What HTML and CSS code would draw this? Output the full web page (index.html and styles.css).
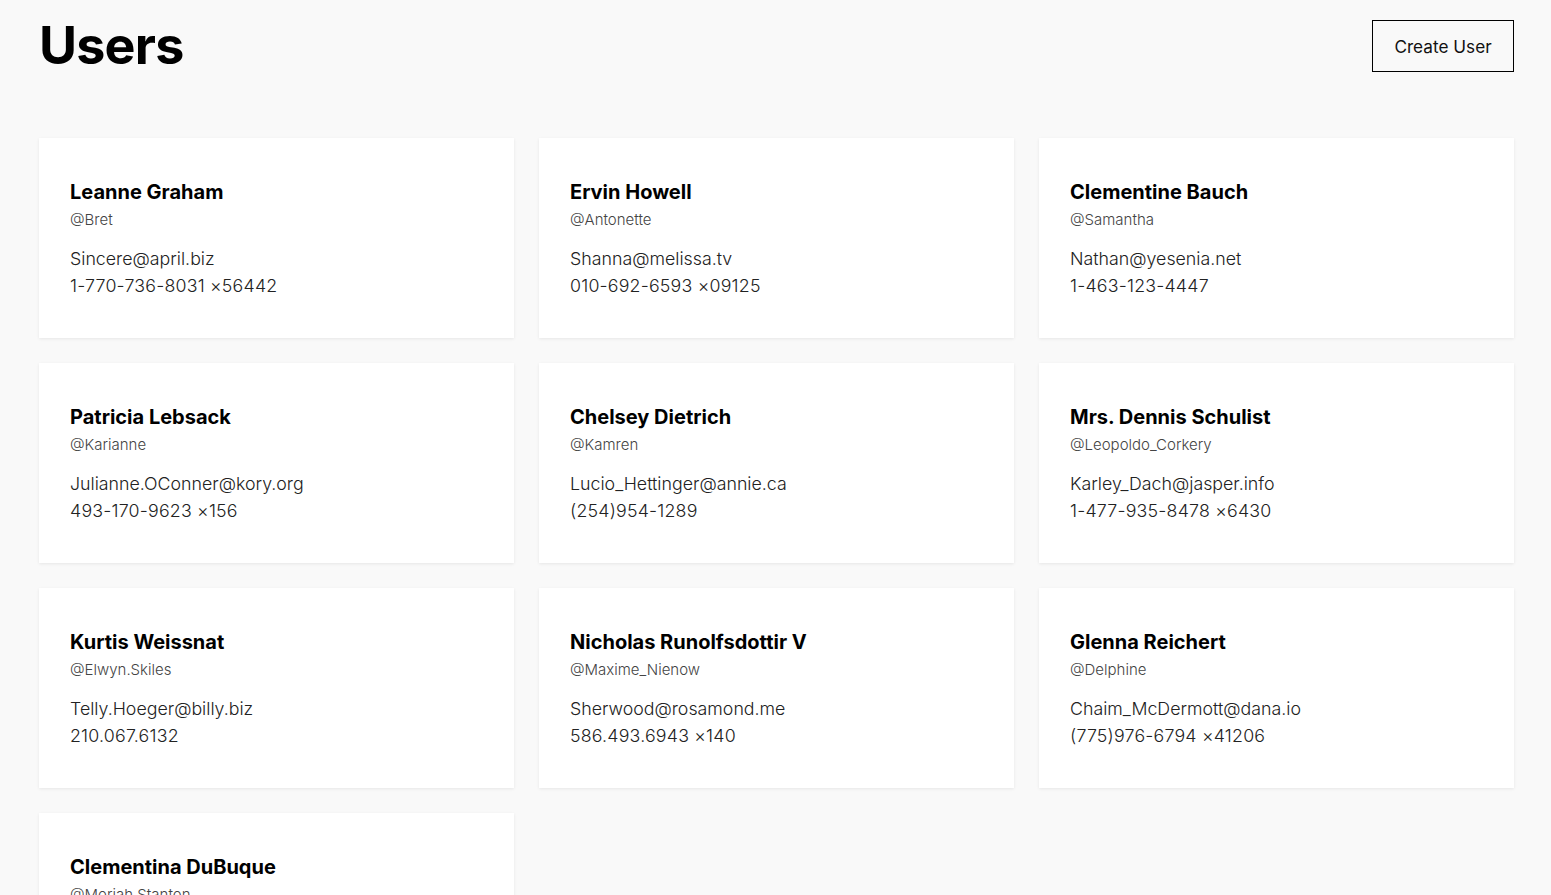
FILE: index.html
```html
<!DOCTYPE html>
<html lang="en">
<head>
<meta charset="utf-8">
<title>Users</title>
<link rel="stylesheet" href="styles.css">
</head>
<body>
<div class="page">
  <header class="header">
    <h1 class="title">Users</h1>
    <button class="create-btn">Create User</button>
  </header>
  <main class="grid">
    <div class="card"><h2 class="name">Leanne Graham</h2><div class="handle">@Bret</div><div class="contact"><div>Sincere@april.biz</div><div class="phone">1-770-736-8031 ×56442</div></div></div>
    <div class="card"><h2 class="name">Ervin Howell</h2><div class="handle">@Antonette</div><div class="contact"><div>Shanna@melissa.tv</div><div class="phone">010-692-6593 ×09125</div></div></div>
    <div class="card"><h2 class="name">Clementine Bauch</h2><div class="handle">@Samantha</div><div class="contact"><div>Nathan@yesenia.net</div><div class="phone">1-463-123-4447</div></div></div>
    <div class="card"><h2 class="name">Patricia Lebsack</h2><div class="handle">@Karianne</div><div class="contact"><div>Julianne.OConner@kory.org</div><div class="phone">493-170-9623 ×156</div></div></div>
    <div class="card"><h2 class="name">Chelsey Dietrich</h2><div class="handle">@Kamren</div><div class="contact"><div>Lucio_Hettinger@annie.ca</div><div class="phone">(254)954-1289</div></div></div>
    <div class="card"><h2 class="name">Mrs. Dennis Schulist</h2><div class="handle">@Leopoldo_Corkery</div><div class="contact"><div>Karley_Dach@jasper.info</div><div class="phone">1-477-935-8478 ×6430</div></div></div>
    <div class="card"><h2 class="name">Kurtis Weissnat</h2><div class="handle">@Elwyn.Skiles</div><div class="contact"><div>Telly.Hoeger@billy.biz</div><div class="phone">210.067.6132</div></div></div>
    <div class="card"><h2 class="name">Nicholas Runolfsdottir V</h2><div class="handle">@Maxime_Nienow</div><div class="contact"><div>Sherwood@rosamond.me</div><div class="phone">586.493.6943 ×140</div></div></div>
    <div class="card"><h2 class="name">Glenna Reichert</h2><div class="handle">@Delphine</div><div class="contact"><div>Chaim_McDermott@dana.io</div><div class="phone">(775)976-6794 ×41206</div></div></div>
    <div class="card"><h2 class="name">Clementina DuBuque</h2><div class="handle">@Moriah.Stanton</div><div class="contact"><div>Rey.Padberg@karina.biz</div><div class="phone">024-648-3804</div></div></div>
  </main>
</div>
</body>
</html>
```

FILE: styles.css
```css
* { box-sizing: border-box; }
html, body { margin: 0; padding: 0; }
body {
  background: #f9f9f9;
  font-family: Inter, "Noto Sans", sans-serif;
  color: #111;
}
.page {
  padding: 20px 37px 40px 39px;
}
.header {
  display: flex;
  justify-content: space-between;
  align-items: flex-start;
  height: 118px;
}
.title {
  margin: 0;
  font-size: 52px;
  font-weight: 700;
  line-height: 52px;
  letter-spacing: -0.8px;
  color: #000;
}
.create-btn {
  width: 142px;
  height: 52px;
  background: transparent;
  border: 1px solid #000;
  border-radius: 0;
  font-family: Inter, "Noto Sans", sans-serif;
  font-size: 17.2px;
  font-weight: 400;
  color: #111;
  padding: 0;
}
.grid {
  display: grid;
  grid-template-columns: repeat(3, 1fr);
  gap: 25px;
}
.card {
  background: #fff;
  height: 200px;
  padding: 42px 31px 0 31px;
  box-shadow: 0 1px 3px rgba(0, 0, 0, 0.08);
}
.name {
  margin: 0;
  font-size: 20px;
  font-weight: 700;
  line-height: 24px;
  color: #000;
}
.handle {
  margin-top: 6px;
  font-size: 15px;
  font-weight: 300;
  line-height: 20px;
  color: #444;
}
.contact {
  margin-top: 15px;
  font-size: 17.8px;
  font-weight: 300;
  line-height: 27px;
  color: #222;
}
.phone {
  letter-spacing: 0.2px;
}
```
